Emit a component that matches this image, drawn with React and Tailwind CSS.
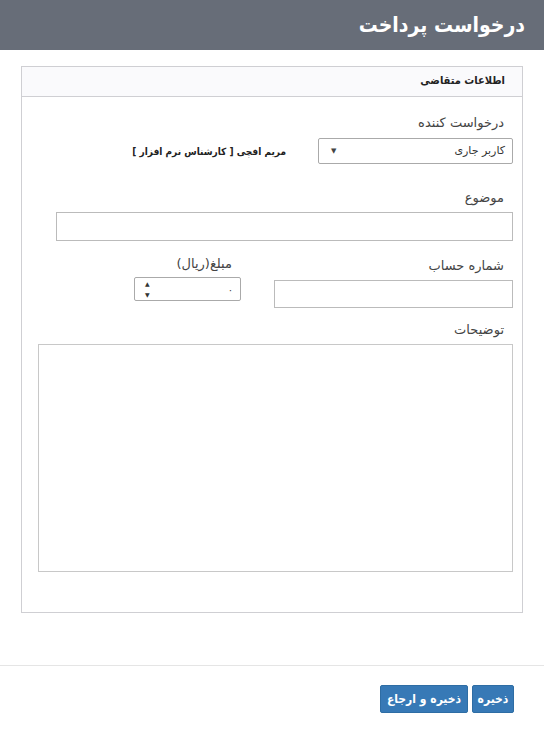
import React from "react";

const font = "font-['DejaVu_Sans','Noto_Sans',sans-serif]";
const condensed = "font-['DejaVu_Sans_Condensed','DejaVu_Sans',sans-serif]";

const Label = ({ children, className = "" }) => (
  <div className={`text-[13px] text-[#444] leading-none ${className}`}>{children}</div>
);

export default function App() {
  return (
    <div dir="rtl" className={`w-[544px] h-[750px] bg-white ${font} text-[#333]`}>
      {/* modal header */}
      <div className="h-[50px] bg-[#676d78] flex items-center px-[19px]">
        <h1 className={`text-white text-[21px] font-bold leading-none ${condensed}`}>درخواست پرداخت</h1>
      </div>

      <div className="px-[21px] pt-[16px]">
        <div className="border border-[#cfcfd3] h-[547px]">
          <div className="h-[30px] bg-[#fafafc] border-b border-[#cfcfd3] flex items-center px-[17px]">
            <span className={`text-[11px] font-bold text-[#222] ${condensed}`}>اطلاعات متقاضی</span>
          </div>

          <div className="px-[9px]">
            {/* requester */}
            <Label className="pr-[9px] mt-[19px]">درخواست کننده</Label>
            <div className="flex items-center mt-[9px]">
              <div className="w-[195px] h-[26px] border border-[#aaa] rounded-[2px] flex items-center justify-between px-[7px]">
                <span className="text-[11px] text-[#333]">کاربر جاری</span>
                <span className="text-[7px] text-[#444] ml-[5px]">▼</span>
              </div>
              <span className={`mr-[32px] text-[10px] font-bold text-[#222] ${condensed}`}>
                مریم افچی [ کارشناس نرم افزار ]
              </span>
            </div>

            {/* subject */}
            <Label className="pr-[9px] mt-[27px]">موضوع</Label>
            <div className="mt-[8px] w-[457px] h-[29px] border border-[#bbb]" />

            {/* account + amount */}
            <div className="flex mt-[16px]">
              <div className="w-[239px]">
                <Label className="pr-[9px] pt-[2px]">شماره حساب</Label>
                <div className="mt-[8px] w-[239px] h-[28px] border border-[#bbb]" />
              </div>
              <div className="mr-[33px] w-[107px]">
                <Label className="text-[12px] pr-[9px]">مبلغ(ریال)</Label>
                <div className="mt-[7px] w-[107px] h-[24px] border border-[#aaa] rounded-[2px] flex items-center justify-between pr-[7px] pl-[10px]">
                  <span className="text-[10px] text-[#444]">۰</span>
                  <span className="flex flex-col text-[6px] leading-[11px] text-[#333]">
                    <span>▲</span>
                    <span>▼</span>
                  </span>
                </div>
              </div>
            </div>

            {/* description */}
            <Label className="pr-[9px] mt-[15px]">توضیحات</Label>
            <div className="mt-[8px] w-[475px] h-[228px] border border-[#c8c8c8]" />
          </div>
        </div>
      </div>

      {/* footer */}
      <div className="mt-[52px] border-t border-[#e5e5e5] px-[30px] pt-[19px] flex gap-[4px]">
        <button className={`h-[28px] w-[42px] bg-[#3779b6] text-white text-[12px] font-bold rounded-[2px] border border-[#2e6da4] ${condensed}`}>
          ذخیره
        </button>
        <button className={`h-[28px] w-[88px] bg-[#3779b6] text-white text-[12px] font-bold rounded-[2px] border border-[#2e6da4] ${condensed}`}>
          ذخیره و ارجاع
        </button>
      </div>
    </div>
  );
}
